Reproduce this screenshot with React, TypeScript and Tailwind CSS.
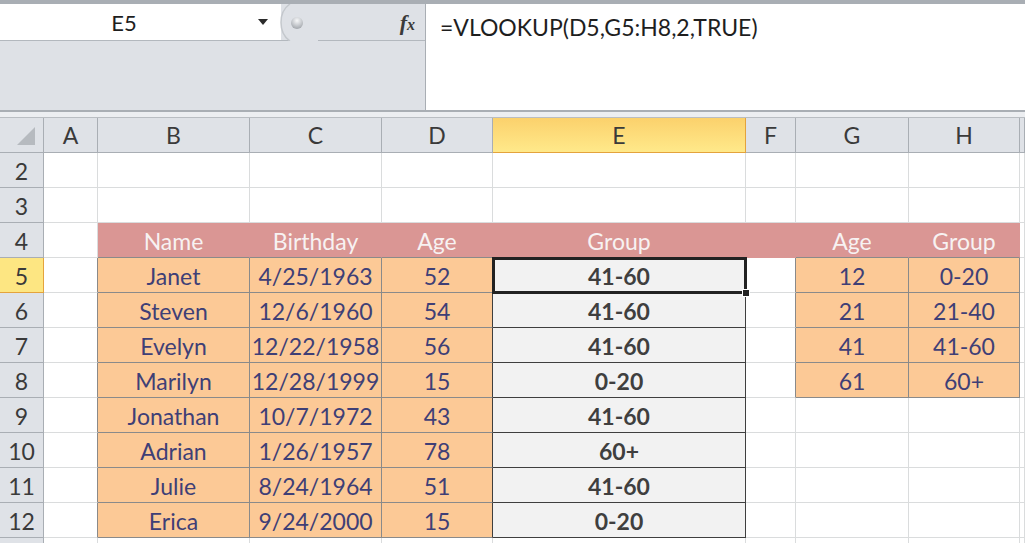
import React from "react";

type Kind = "blank" | "head" | "input" | "output";

const cols = ["A", "B", "C", "D", "E", "F", "G", "H", ""];

const people = [
  ["Janet", "4/25/1963", "52", "41-60"],
  ["Steven", "12/6/1960", "54", "41-60"],
  ["Evelyn", "12/22/1958", "56", "41-60"],
  ["Marilyn", "12/28/1999", "15", "0-20"],
  ["Jonathan", "10/7/1972", "43", "41-60"],
  ["Adrian", "1/26/1957", "78", "60+"],
  ["Julie", "8/24/1964", "51", "41-60"],
  ["Erica", "9/24/2000", "15", "0-20"],
];

const lookup = [
  ["12", "0-20"],
  ["21", "21-40"],
  ["41", "41-60"],
  ["61", "60+"],
];

const font = { fontFamily: "Lato, 'Open Sans', sans-serif" };

// per-cell style: fill, text, right border, bottom border
function cellClass(row: number, col: number): { kind: Kind; cls: string } {
  const isInput = (r: number, c: number) =>
    (r >= 5 && r <= 12 && c >= 1 && c <= 3) || (r >= 5 && r <= 8 && c >= 6 && c <= 7);
  const isOutput = (r: number, c: number) => r >= 5 && r <= 12 && c === 4;
  const isHead = (r: number, c: number) => r === 4 && c >= 1 && c <= 7;

  let kind: Kind = "blank";
  if (isInput(row, col)) kind = "input";
  else if (isOutput(row, col)) kind = "output";
  else if (isHead(row, col)) kind = "head";

  // right border colour
  let br = "border-r-[#dadcdd]";
  if (kind === "output" || isOutput(row, col + 1)) br = "border-r-[#3f3f3f]";
  else if (kind === "input" || isInput(row, col + 1)) br = "border-r-[#8a8a8a]";
  else if (kind === "head") br = "border-r-[#da9694]";

  let bb = "border-b-[#dadcdd]";
  if (kind === "output" || isOutput(row + 1, col)) bb = "border-b-[#3f3f3f]";
  else if (kind === "input" || isInput(row + 1, col)) bb = "border-b-[#8a8a8a]";
  else if (kind === "head") bb = "border-b-[#da9694]";

  let bg = "bg-white";
  let text = "";
  if (kind === "input") {
    bg = "bg-[#fcc996]";
    text = "text-[#3f3f76]";
  } else if (kind === "output") {
    bg = "bg-[#f2f2f2]";
    text = "text-[#3f3f3f] font-bold";
  } else if (kind === "head") {
    bg = "bg-[#da9694]";
    text = "text-[#f7f2f2]";
  }
  return { kind, cls: `${bg} ${text} ${br} ${bb}` };
}

function cellText(row: number, col: number): string {
  if (row === 4) {
    return ["", "Name", "Birthday", "Age", "Group", "", "Age", "Group", ""][col] ?? "";
  }
  if (row >= 5 && row <= 12) {
    const p = people[row - 5];
    if (col >= 1 && col <= 4) return p[col - 1];
    if (row <= 8 && (col === 6 || col === 7)) return lookup[row - 5][col - 6];
  }
  return "";
}

function FormulaBar() {
  return (
    <div className="flex h-[106px] bg-[#dee1e6]">
      <div className="flex w-[426px] flex-col border-r border-r-[#a9aeb4]">
        <div className="flex h-[37px] items-center border-b border-b-[#b3b8be]">
          <div className="flex h-full w-[281px] items-center bg-white">
            <span className="w-[248px] text-center text-[22px] text-[#1e1e1e]" style={font}>
              E5
            </span>
            <svg width="10" height="6" viewBox="0 0 10 6" className="ml-[10px]">
              <path d="M0 0 H10 L5 6 Z" fill="#2b2b2b" />
            </svg>
          </div>
          <svg width="40" height="37" viewBox="0 0 40 37" className="-ml-[3px] shrink-0">
            <path d="M12 0 C 0 8, 0 29, 12 37 L 40 37 L 40 0 Z" fill="#dee1e6" />
            <path d="M12 0 C 0 8, 0 29, 12 37" fill="none" stroke="#c4c8cd" strokeWidth="1.5" />
            <defs>
              <radialGradient id="dot" cx="0.5" cy="0.3" r="0.65">
                <stop offset="0" stopColor="#f7f8f9" />
                <stop offset="0.6" stopColor="#c9ccd0" />
                <stop offset="1" stopColor="#a8acb1" />
              </radialGradient>
            </defs>
            <circle cx="19" cy="19" r="6" fill="url(#dot)" />
          </svg>
          <div className="flex-1" />
          <span
            className="mr-[10px] text-[22px] font-bold italic text-[#3a3a3a]"
            style={{ fontFamily: "'Liberation Serif', serif" }}
          >
            f<span className="text-[16px]">x</span>
          </span>
        </div>
        <div className="flex-1" />
      </div>
      <div className="flex-1 bg-white pl-[14px] pt-[6px]">
        <span className="text-[23px] text-[#1e1e1e]" style={font}>
          =VLOOKUP(D5,G5:H8,2,TRUE)
        </span>
      </div>
    </div>
  );
}

export default function App() {
  const rows = [2, 3, 4, 5, 6, 7, 8, 9, 10, 11, 12, 13];
  return (
    <div className="h-[543px] w-[1025px] overflow-hidden bg-white" style={font}>
      <div className="h-[4px] bg-[#a9aeb4]" />
      <FormulaBar />
      <div className="h-[2px] bg-[#a9aeb4]" />
      <div className="h-[6px] border-b border-b-[#b9bdc2] bg-[#eceef1]" />
      <div className="relative grid grid-cols-[44px_54px_152px_132px_111px_253px_50px_113px_111px_1fr] auto-rows-[35px]">
        {/* column headers */}
        <div className="relative border-b border-r border-[#a9aeb4] bg-[#dfe2e7]">
          <svg width="18" height="18" viewBox="0 0 18 18" className="absolute bottom-[7px] right-[8px]">
            <path d="M18 0 V18 H0 Z" fill="#b6babf" />
          </svg>
        </div>
        {cols.map((c) => (
          <div
            key={c || "z"}
            className={
              c === "E"
                ? "flex items-center justify-center border-b border-r border-[#e4a33c] bg-gradient-to-b from-[#fbd16c] to-[#ffe98a] text-[23px] text-[#3a3a3a]"
                : "flex items-center justify-center border-b border-r border-[#a9aeb4] bg-[#dfe2e7] text-[23px] text-[#3a3a3a]"
            }
          >
            {c}
          </div>
        ))}
        {rows.map((r) => (
          <React.Fragment key={r}>
            <div
              className={
                r === 5
                  ? "flex items-center justify-center border-b border-r border-[#e4a33c] bg-[#fde682] pt-[2px] text-[23px] text-[#3a3a3a]"
                  : "flex items-center justify-center border-b border-r border-[#a9aeb4] bg-[#dfe2e7] pt-[2px] text-[23px] text-[#3a3a3a]"
              }
            >
              {r === 13 ? "" : r}
            </div>
            {cols.map((_, ci) => {
              const col = ci;
              const { cls } = cellClass(r, col);
              return (
                <div
                  key={ci}
                  className={`flex items-center justify-center border-b border-r pt-[3px] text-[23px] ${cls}`}
                >
                  {cellText(r, col)}
                </div>
              );
            })}
          </React.Fragment>
        ))}
        {/* active cell E5 */}
        <div className="pointer-events-none absolute left-[492px] top-[139px] h-[37px] w-[255px] border-[3px] border-[#222]" />
        <div className="pointer-events-none absolute left-[742px] top-[171px] h-[8px] w-[8px] border border-white bg-[#222]" />
      </div>
    </div>
  );
}
